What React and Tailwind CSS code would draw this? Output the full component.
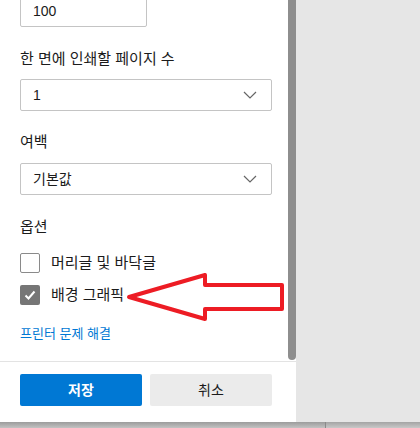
const font = { fontFamily: "'Liberation Sans', 'Noto Sans CJK KR', sans-serif" };

const Chevron = () => (
  <svg width="14" height="8" viewBox="0 0 14 8" fill="none">
    <path d="M1 1l6 6 6-6" stroke="#666" strokeWidth="1.2" />
  </svg>
);

const Select = ({ value }) => (
  <div className="flex h-[32px] w-[252px] items-center justify-between rounded-[2px] border border-[#c4c4c4] pl-[12px] pr-[14px] text-[14px] text-[#1b1b1b]">
    <span>{value}</span>
    <Chevron />
  </div>
);

const Label = ({ children, className = "" }) => (
  <div className={`h-[20px] text-[15px] leading-[20px] text-[#1b1b1b] ${className}`}>{children}</div>
);

const Checkbox = ({ checked, label }) => (
  <div className="flex h-[20px] items-center gap-[11px]">
    {checked ? (
      <div className="flex h-[20px] w-[20px] items-center justify-center rounded-[2px] bg-[#767676]">
        <svg width="14" height="14" viewBox="0 0 14 14" fill="none">
          <path d="M2.5 7.5l3 3 6-7" stroke="#fff" strokeWidth="2" />
        </svg>
      </div>
    ) : (
      <div className="h-[20px] w-[20px] rounded-[2px] border border-[#8a8a8a] bg-white" />
    )}
    <span className="text-[15px] text-[#1b1b1b]">{label}</span>
  </div>
);

const App = () => {
  return (
    <div className="flex h-[428px] w-[420px] flex-col overflow-hidden bg-[#e6e6e6]" style={font}>
      <div className="flex h-[422px]">
        <div className="flex w-[296px] flex-col bg-white">
          <div className="relative flex h-[361px] overflow-hidden">
            <div className="flex-1 pl-[20px]">
              <div className="-mt-[5px] flex h-[32px] w-[127px] items-center rounded-[2px] border border-[#c4c4c4] pl-[12px] text-[14px] text-[#1b1b1b]">
                100
              </div>
              <Label className="mt-[22px]">한 면에 인쇄할 페이지 수</Label>
              <div className="mt-[10px]">
                <Select value="1" />
              </div>
              <Label className="mt-[21px]">여백</Label>
              <div className="mt-[11px]">
                <Select value="기본값" />
              </div>
              <Label className="mt-[22px]">옵션</Label>
              <div className="mt-[16px] flex flex-col gap-[12px]">
                <Checkbox label="머리글 및 바닥글" />
                <Checkbox checked label="배경 그래픽" />
              </div>
              <div className="mt-[20px] h-[18px] text-[13px] leading-[18px] text-[#0078d4]">프린터 문제 해결</div>
            </div>
            <div className="h-[360px] w-[8px] rounded-b-[4px] bg-[#8e8e8e]" />
            <svg className="absolute left-0 top-0" width="296" height="361" viewBox="0 0 296 361" fill="none">
              <polygon
                points="129,297 205,275 205,285 282,285 282,309 205,309 205,319"
                stroke="#ed1c24"
                strokeWidth="4"
                strokeLinejoin="round"
                fill="none"
              />
            </svg>
          </div>
          <div className="flex flex-1 gap-[8px] border-t border-[#e3e3e3] pl-[20px] pt-[12px]">
            <button className="h-[32px] w-[122px] rounded-[2px] bg-[#0078d4] text-[14px] font-semibold text-white">저장</button>
            <button className="h-[32px] w-[122px] rounded-[2px] bg-[#ebebeb] text-[14px] text-[#1b1b1b]">취소</button>
          </div>
        </div>
        <div className="flex-1" />
      </div>
      <div className="flex h-[6px]">
        <div className="w-[325px] bg-gradient-to-b from-[#9c9c9c] to-[#c2c2c2]" />
        <div className="w-px bg-[#8a8a8a]" />
        <div className="flex-1 bg-gradient-to-b from-[#a4a4a4] to-[#c8c8c8]" />
      </div>
    </div>
  );
};

export default App;
